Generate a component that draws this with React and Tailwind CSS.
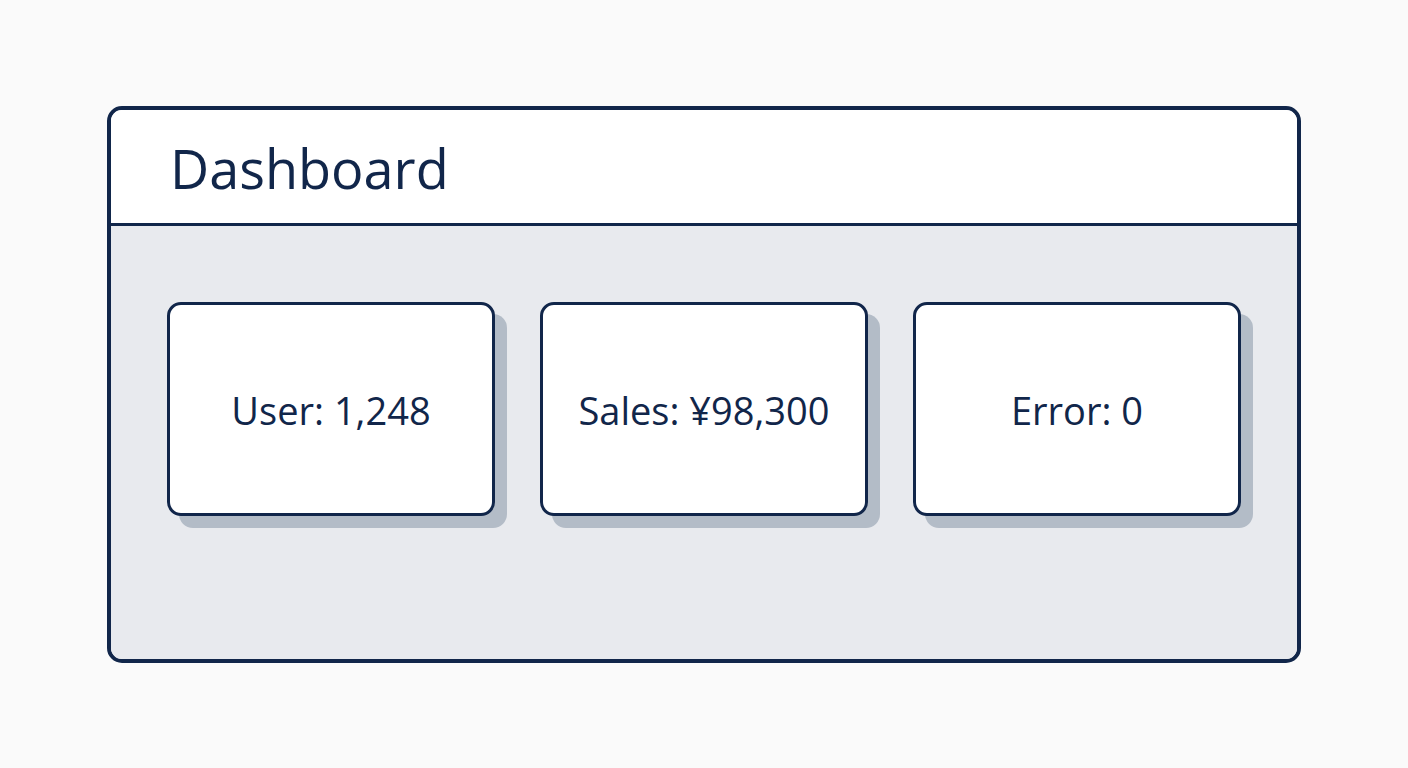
import React from 'react';

const stats = [
  { label: 'User: 1,248' },
  { label: 'Sales: ¥98,300' },
  { label: 'Error: 0' },
];

const StatCard = ({ label }) => (
  <div className="flex-1 h-[214px] bg-white border-[3px] border-[#11264a] rounded-[14px] shadow-[12px_12px_0_#b3bcc7] flex items-center justify-center">
    <span className="text-[38px] font-medium text-[#11264a] pt-1">{label}</span>
  </div>
);

const App = () => {
  return (
    <div className="w-full h-[768px] bg-[#fafafa] flex items-center justify-center" style={{ fontFamily: '"Open Sans", "Noto Sans", "Noto Sans CJK JP", sans-serif' }}>
      <div className="w-[1194px] h-[557px] border-4 border-[#11264a] rounded-[15px] overflow-hidden flex flex-col">
        <header className="h-[116px] bg-white border-b-[3px] border-[#11264a] flex items-center px-[59px]">
          <h1 className="text-[54px] font-medium text-[#11264a] pt-1">Dashboard</h1>
        </header>
        <main className="flex-1 bg-[#e8eaee] px-[56px] pt-[76px]">
          <div className="flex gap-[45px]">
            {stats.map((s) => (
              <StatCard key={s.label} label={s.label} />
            ))}
          </div>
        </main>
      </div>
    </div>
  );
};

export default App;
